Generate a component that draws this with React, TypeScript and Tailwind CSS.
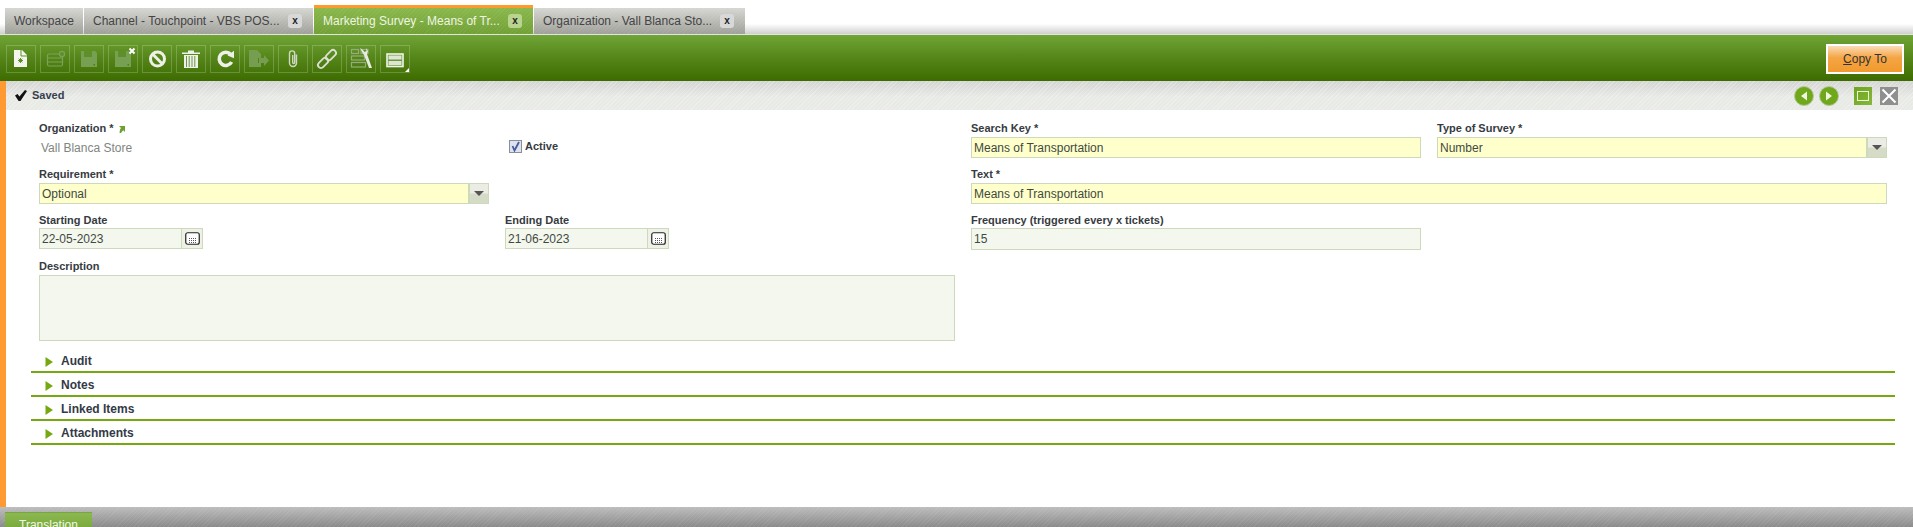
import React from "react";

const font = "font-['Liberation_Sans',Arial,sans-serif]";

function Tab({ label, active, close = true, width }: { label: string; active?: boolean; close?: boolean; width: string }) {
  return (
    <div
      className={`${width} flex items-center justify-between shrink-0 text-xs pl-[9px] pr-[11px] ${
        active
          ? "h-[29px] border-t-[3px] border-[#ff9a2f] text-[#eef5e0] bg-[image:repeating-linear-gradient(135deg,rgba(255,255,255,.05)_0,rgba(255,255,255,.05)_1px,transparent_1px,transparent_3px),linear-gradient(#8ab84d,#71a035)]"
          : "h-[26px] text-[#444] mr-px bg-[image:repeating-linear-gradient(135deg,rgba(255,255,255,.05)_0,rgba(255,255,255,.05)_1px,transparent_1px,transparent_3px),linear-gradient(#d6d6d2,#a0a09a)]"
      }`}
    >
      <span className="whitespace-nowrap">{label}</span>
      {close && (
        <span className={`w-[14px] h-[14px] rounded-[3px] flex items-center justify-center text-[10px] font-bold leading-none text-[#222] ${active ? "bg-[#b9d48e]" : "bg-[#d8d8d8]"}`}>
          x
        </span>
      )}
    </div>
  );
}

function Btn({ children, corner }: { children: React.ReactNode; corner?: boolean }) {
  return (
    <div className="relative w-[30px] h-[28px] border border-white/20 shrink-0">
      <svg viewBox="0 0 30 28" width="30" height="28" className="absolute -left-px -top-px">
        {children}
      </svg>
      {corner && (
        <svg width="4" height="4" viewBox="0 0 4 4" className="absolute right-0 bottom-0">
          <path d="M4 0V4H0Z" fill="#fff" />
        </svg>
      )}
    </div>
  );
}

const Floppy = () => (
  <g fill="#78a052">
    <path d="M7 6h14l2 2v14H7Z" />
    <rect x="10" y="6" width="8" height="6" fill="#5f8f2a" />
    <rect x="19.5" y="19" width="1.5" height="1.5" fill="#4f7d1e" />
  </g>
);

function Toolbar() {
  return (
    <div className="h-[46px] flex items-center pl-[6px] pr-[9px] pt-[1px] gap-[4px] bg-[linear-gradient(#70a536,#5a8b1e_40%,#3d6b00)] shrink-0">
      <Btn>
        <path d="M8 5h8l5 5v12H8Z" fill="#f4f6ee" />
        <path d="M15 5v6h6" fill="none" stroke="#5f8f2a" strokeWidth="1" />
        <path d="M14.5 13v5M12 15.5h5M12.7 13.7l3.6 3.6M16.3 13.7l-3.6 3.6" stroke="#5f8f2a" strokeWidth="1" />
      </Btn>
      <Btn>
        <g fill="none" stroke="#7ca258" strokeWidth="1.2">
          <rect x="7.5" y="9" width="15" height="12" rx="1.5" />
          <path d="M7.5 13h15M7.5 17h15" />
          <circle cx="22" cy="9" r="2.6" fill="#5f8f2a" />
        </g>
      </Btn>
      <Btn>
        <Floppy />
      </Btn>
      <Btn>
        <Floppy />
        <path d="M21.5 3.5l5 5M26.5 3.5l-5 5" stroke="#fff" strokeWidth="2" />
      </Btn>
      <Btn>
        <circle cx="15.5" cy="14" r="7" fill="none" stroke="#eef1e8" strokeWidth="3" />
        <path d="M10.8 9.3l9.4 9.4" stroke="#eef1e8" strokeWidth="3" />
      </Btn>
      <Btn>
        <path d="M6 7.5h18v1.5H6ZM12 5.5h6v2h-6Z" fill="#eef1e8" />
        <path d="M8 10h14v13H8Z" fill="#eef1e8" />
        <path d="M10.5 11v11M13.2 11v11M16 11v11M18.8 11v11" stroke="#6c944a" strokeWidth="1" />
      </Btn>
      <Btn>
        <path d="M20.8 9.5A6.6 6.6 0 1 0 21.6 17" fill="none" stroke="#eef1e8" strokeWidth="3.6" />
        <path d="M17.5 10.6L24 5.8v7.4Z" fill="#eef1e8" />
      </Btn>
      <Btn>
        <path d="M5 5h8l4 4v4h-3v5h3v4H5Z" fill="#769d50" />
        <path d="M15 13h5v-3l5 5.5-5 5.5v-3h-5Z" fill="#769d50" />
      </Btn>
      <Btn>
        <path d="M18.5 9.5v8.5a3.5 3.5 0 0 1-7 0V8.5a2.6 2.6 0 0 1 5.2 0v9a1 1 0 0 1-2 0V10" fill="none" stroke="#d0d8c4" strokeWidth="1.4" />
      </Btn>
      <Btn>
        <g fill="none" stroke="#dbe0d2" strokeWidth="1.8" transform="rotate(-45 15 14)">
          <rect x="3.5" y="11" width="12" height="6" rx="3" />
          <rect x="14.5" y="11" width="12" height="6" rx="3" />
        </g>
      </Btn>
      <Btn>
        <g fill="none" stroke="#95ac7c" strokeWidth="1.2">
          <rect x="5.5" y="4.5" width="7" height="4" />
          <rect x="15" y="4.5" width="7" height="4" />
          <rect x="5.5" y="11" width="13" height="4" />
          <rect x="5.5" y="17.5" width="14" height="4.5" />
        </g>
        <path d="M14 3l2 4 2 3 5 13h3L21 9l1-3-2-3 .5 3-2 1-1.5-2Z" fill="#e6eadf" />
      </Btn>
      <Btn corner>
        <rect x="7" y="9" width="16" height="12.5" fill="#6a9a38" stroke="#f2f4ec" strokeWidth="1.6" />
        <rect x="8.5" y="10.5" width="13" height="4" fill="#dfe5d4" />
        <rect x="8.5" y="16" width="13" height="4" fill="#dfe5d4" />
      </Btn>
      <div className="ml-auto w-[78px] h-[30px] border-2 border-white text-xs text-[#333] flex items-center justify-center bg-[linear-gradient(#fbdcb8,#f4a544_45%,#f19a2e)]">
        <span>
          <span className="underline">C</span>opy To
        </span>
      </div>
    </div>
  );
}

function Status() {
  return (
    <div className="h-[29px] flex items-center pl-[9px] pr-[15px] shrink-0 bg-[image:repeating-linear-gradient(135deg,rgba(255,255,255,.25)_0,rgba(255,255,255,.25)_1px,transparent_1px,transparent_3px),linear-gradient(#d4d4d4,#e8eae5_55%)]">
      <svg width="12" height="11" viewBox="0 0 12 11" className="mr-[5px]">
        <path d="M0 5.5L2.6 4l1.8 2.6L10 0l2 1-6.5 10H3.6Z" fill="#111" />
      </svg>
      <span className="text-[11px] font-bold text-[#35404f]">Saved</span>
      <div className="ml-auto flex items-center">
        <Round dir="l" />
        <div className="w-[5px]" />
        <Round dir="r" />
        <div className="w-[15px]" />
        <div className="w-[18px] h-[18px] bg-[linear-gradient(135deg,#6ca51c,#86b83a)] flex items-center justify-center">
          <div className="w-3 h-[10px] border-[1.5px] border-[#eef4e0]" />
        </div>
        <div className="w-2" />
        <div className="w-[18px] h-[18px] bg-[#8f8f8f] flex items-center justify-center">
          <svg width="18" height="18" viewBox="0 0 18 18">
            <path d="M2.5 2.5l13 13M15.5 2.5l-13 13" stroke="#fff" strokeWidth="2" />
          </svg>
        </div>
      </div>
    </div>
  );
}

function Round({ dir }: { dir: "l" | "r" }) {
  return (
    <div className="w-5 h-5 rounded-full bg-[#6fa81a] border border-[#b8c8a0] flex items-center justify-center">
      <svg width="8" height="10" viewBox="0 0 8 10">
        <path d={dir === "l" ? "M7 0.5V9.5L1 5Z" : "M1 0.5V9.5L7 5Z"} fill="#f0f5e4" />
      </svg>
    </div>
  );
}

const Label = ({ children }: { children: React.ReactNode }) => (
  <div className="h-[17px] leading-[16px] text-[11px] font-bold text-[#363b41] whitespace-nowrap">{children}</div>
);

const fieldBase = "h-[21px] border border-[#ccd9ba] text-xs text-[#3f4a3f] px-[2px] flex items-center";

function Select({ value }: { value: string }) {
  return (
    <div className={`${fieldBase} !pr-0 bg-[#ffffcc] w-full`}>
      <span className="flex-1">{value}</span>
      <div className="w-[20px] h-[19px] border-l-2 border-[#ccd9ba] flex items-center justify-center bg-[linear-gradient(#ebede4_45%,#d6dbc8_55%)]">
        <svg width="10" height="5" viewBox="0 0 10 5">
          <path d="M0 0h10L5 5Z" fill="#555" />
        </svg>
      </div>
    </div>
  );
}

function DateField({ value }: { value: string }) {
  return (
    <div className="flex w-[164px] -mt-px">
      <div className={`${fieldBase} bg-[#f4f7ee] w-[143px]`}>{value}</div>
      <div className="w-[21px] h-[21px] border border-l-0 border-[#ccd9ba] flex items-center justify-center bg-[#eef1e6]">
        <svg width="15" height="13" viewBox="0 0 15 13">
          <rect x="0.75" y="0.75" width="13.5" height="11.5" rx="2" fill="#fff" stroke="#222" strokeWidth="1.2" />
          <path d="M4 6.5h8M4 8.5h8M4 10.5h8" stroke="#555" strokeWidth="1" strokeDasharray="1 1" />
        </svg>
      </div>
    </div>
  );
}

function Form() {
  return (
    <div className="grid grid-cols-[repeat(4,450px)] grid-rows-[46px_46px_46px_83px] gap-x-4 pl-[33px] pt-[10px]">
      <div>
        <div className="flex items-center gap-1">
          <Label>Organization *</Label>
          <svg width="7" height="8" viewBox="0 0 7 8">
            <path d="M1 1h6v6L5.2 5.2 3 8H1.5l.5-3.5L3 3Z" fill="#6fa032" />
          </svg>
        </div>
        <div className="h-[21px] flex items-center text-xs text-[#7f8580] pl-[2px]">Vall Blanca Store</div>
      </div>
      <div className="flex items-start pt-[20px] pl-1 gap-[3px]">
        <div className="w-[13px] h-[13px] border border-[#8a8f96] bg-[#dde3f0] flex items-center justify-center">
          <svg width="11" height="11" viewBox="0 0 11 11">
            <path d="M2.5 5l2 4.5L9 1" fill="none" stroke="#4a5a9a" strokeWidth="1.8" />
          </svg>
        </div>
        <span className="text-[11px] font-bold text-[#363b41] leading-[12px]">Active</span>
      </div>
      <div>
        <Label>Search Key *</Label>
        <div className={`${fieldBase} bg-[#ffffcc]`}>Means of Transportation</div>
      </div>
      <div>
        <Label>Type of Survey *</Label>
        <Select value="Number" />
      </div>

      <div>
        <Label>Requirement *</Label>
        <Select value="Optional" />
      </div>
      <div />
      <div className="col-span-2">
        <Label>Text *</Label>
        <div className={`${fieldBase} bg-[#ffffcc]`}>Means of Transportation</div>
      </div>

      <div>
        <Label>Starting Date</Label>
        <DateField value="22-05-2023" />
      </div>
      <div>
        <Label>Ending Date</Label>
        <DateField value="21-06-2023" />
      </div>
      <div>
        <Label>Frequency (triggered every x tickets)</Label>
        <div className={`${fieldBase} bg-[#f4f7ee] -mt-px !h-[22px]`}>15</div>
      </div>
      <div />

      <div className="col-span-2">
        <Label>Description</Label>
        <div className="h-[66px] border border-[#ccd9ba] bg-[#f4f7ee]" />
      </div>
    </div>
  );
}

function Section({ label }: { label: string }) {
  return (
    <div className="h-[24px] pt-[2px] border-b-2 border-[#76a811] flex items-center pl-[14px]">
      <svg width="8" height="10" viewBox="0 0 8 10" className="mr-[8px] mt-[1px]">
        <path d="M0.5 0V10L8 5Z" fill="#76a811" />
      </svg>
      <span className="text-xs font-bold text-[#333a46]">{label}</span>
    </div>
  );
}

export default function App() {
  return (
    <div className={`${font} w-[1913px] h-[527px] overflow-hidden flex flex-col bg-white`}>
      <div className="h-[35px] shrink-0 flex items-end pl-[5px] bg-[linear-gradient(#fff_70%,#cfcfcf)] border-b border-[#e4e4e4]">
        <Tab label="Workspace" width="w-[78px]" close={false} />
        <Tab label="Channel - Touchpoint - VBS POS..." width="w-[229px]" />
        <Tab label="Marketing Survey - Means of Tr..." width="w-[219px]" active />
        <div className="w-px" />
        <Tab label="Organization - Vall Blanca Sto..." width="w-[211px]" />
      </div>
      <Toolbar />
      <div className="flex-1 border-l-[6px] border-[#ff9a33] flex flex-col min-h-0">
        <Status />
        <Form />
        <div className="mt-[8px] ml-[25px] mr-[18px]">
          <Section label="Audit" />
          <Section label="Notes" />
          <Section label="Linked Items" />
          <Section label="Attachments" />
        </div>
      </div>
      <div className="h-[20px] shrink-0 pt-[5px] pl-[5px] bg-[image:repeating-linear-gradient(135deg,rgba(255,255,255,.06)_0,rgba(255,255,255,.06)_1px,transparent_1px,transparent_3px),linear-gradient(#bdbdbd,#8a8a8a)]">
        <div className="w-[87px] h-[15px] bg-[linear-gradient(#8bb84f,#7bab3e)] border-t border-[#7aa544] text-xs text-[#f2f7e8] text-center pt-[5px] overflow-hidden leading-[14px]">
          Translation
        </div>
      </div>
    </div>
  );
}
